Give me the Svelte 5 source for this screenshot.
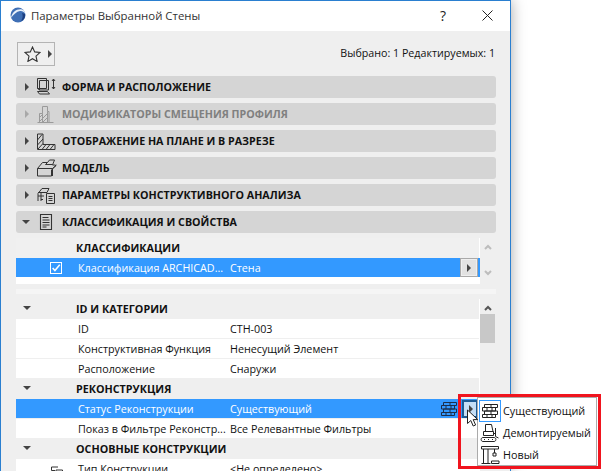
<script lang="ts">
  const sections = [
    { title: 'ФОРМА И РАСПОЛОЖЕНИЕ', icon: 'form' },
    { title: 'МОДИФИКАТОРЫ СМЕЩЕНИЯ ПРОФИЛЯ', icon: 'profile', disabled: true },
    { title: 'ОТОБРАЖЕНИЕ НА ПЛАНЕ И В РАЗРЕЗЕ', icon: 'hatch' },
    { title: 'МОДЕЛЬ', icon: 'model' },
    { title: 'ПАРАМЕТРЫ КОНСТРУКТИВНОГО АНАЛИЗА', icon: 'analysis' },
    { title: 'КЛАССИФИКАЦИЯ И СВОЙСТВА', icon: 'doc', open: true }
  ];

  const props = [
    { kind: 'head', label: 'ID И КАТЕГОРИИ' },
    { kind: 'row', label: 'ID', value: 'СТН-003' },
    { kind: 'row', label: 'Конструктивная Функция', value: 'Ненесущий Элемент' },
    { kind: 'row', label: 'Расположение', value: 'Снаружи' },
    { kind: 'head', label: 'РЕКОНСТРУКЦИЯ' },
    { kind: 'sel', label: 'Статус Реконструкции', value: 'Существующий' },
    { kind: 'row', label: 'Показ в Фильтре Реконстр...', value: 'Все Релевантные Фильтры' },
    { kind: 'head', label: 'ОСНОВНЫЕ КОНСТРУКЦИИ' },
    { kind: 'link', label: 'Тип Конструкции', value: '<Не определено>' }
  ];
</script>

{#snippet brick(color)}
  <svg width="16" height="14" viewBox="0 0 16 14" fill="none" stroke={color}>
    <path d="M2.500.5h13v3h-13zM.5 3.500h13v3.500H.5zM2.500 7h13v3.500h-13zM.5 10.500h13v3H.5zM9 .5v3M5 3.500V7M10 3.500V7M9 7v3.500M5 10.500v3M10 10.500v3" />
  </svg>
{/snippet}

<div class="window">
  <header class="titlebar">
    <svg class="logo" width="16" height="16" viewBox="0 0 16 16">
      <circle cx="8" cy="8" r="7.500" fill="#3f6fb5" />
      <path d="M1 11C2 5 7 1.500 12 2.500c2 .5 3 2 3 4-1-2-3-2.800-5-2.500C6.500 4.500 3.500 7.500 1 11z" fill="#e8f0fa" />
      <path d="M12 6c1 2 1 5-1 8 3-1 4.500-4 4-7z" fill="#1d3f80" />
    </svg>
    <span class="title">Параметры Выбранной Стены</span>
    <span class="help">?</span>
    <svg class="close" width="11" height="11" viewBox="0 0 11 11" stroke="#222" fill="none"><path d="M.5.5l10 10M10.500.5l-10 10" /></svg>
  </header>

  <div class="body">
    <div class="toolbar">
      <button class="fav" aria-label="Избранное">
        <svg width="17" height="16" viewBox="0 0 17 16" fill="none" stroke="#333" stroke-width="1.100"><path d="M8.500 1l2.200 4.900 5.300.6-4 3.600 1.100 5.300-4.600-2.700-4.600 2.700 1.100-5.300-4-3.600 5.300-.6z" /></svg>
        <i class="tri-r"></i>
      </button>
      <span class="counts">Выбрано: 1 Редактируемых: 1</span>
    </div>

    {#each sections as s}
      <div class="section" class:disabled={s.disabled}>
        <i class={s.open ? 'tri-d' : 'tri-r'}></i>
        <svg class="sicon" width="22" height="20" viewBox="0 0 22 20" fill="none" stroke={s.disabled ? '#9a9a9a' : '#333'} stroke-width="1">
          {#if s.icon === 'form'}
            <path d="M.5 1.500h9v10h-9zM2.500 3.500h9v9.500h-9zM.5 11.500l2 1.500M.5 14.500h10l2 2.500h-10zM16.500 2v10M15 4l1.500-2L18 4M15 10l1.500 2 1.500-2" />
          {:else if s.icon === 'profile'}
            <path d="M.5 18.500h16M2.500 18.500V9.500h3V2.500h5v5H12v11M5.500 9.500v9M10.500 7.500v11M6 14l4-4M6 18l4-4M3 13l2-2M3 17l2-2" />
          {:else if s.icon === 'hatch'}
            <path d="M.5 18.500V3H6v10.500h12v5zM.5 9L5 3.500M.5 14L6 8M1 18l5-5.500M5 18.500l4-5M9 18.500l4-5M13 18.500l4-5" />
          {:else if s.icon === 'model'}
            <path d="M.5 10.500l5-6h5l2-2.500h5l-2 5h3v1l-4 4v6H.5zM.5 10.500h15v7.500M15.500 10.500l4-3.500M10.500 4.500l-2 2h7" />
          {:else if s.icon === 'analysis'}
            <path d="M1 16V8.500L5 3.500h7l-2 4H1M1 11h6M4 8v8M4 14.500h2" />
            <path d="M9.500 8.500h8v10h-8zM11.500 11.500h4M11.500 13.500h4M11.500 15.500h4" />
          {:else}
            <path d="M3.500 2.500h11v15h-11zM5.500 5.500h6M5.500 8h7M5.500 10.500h7M5.500 13h7M5.500 15h4" stroke-width="1.100" />
          {/if}
        </svg>
        <span class="stitle">{s.title}</span>
      </div>
    {/each}

    <div class="classif">
      <div class="list">
        <div class="chead">КЛАССИФИКАЦИИ</div>
        <div class="csel">
          <span class="check">
            <svg width="10" height="10" viewBox="0 0 12 12" fill="none" stroke="#fff" stroke-width="1.800"><path d="M2 6l2.700 3L10.500 2" /></svg>
          </span>
          <span class="clabel">Классификация ARCHICAD...</span>
          <span>Стена</span>
          <button class="rowbtn" aria-label="Выбрать"><i class="tri-r"></i></button>
          <i class="sliver"></i>
        </div>
        <div class="cfoot"></div>
      </div>
      <div class="bar">
        <svg width="8" height="6" viewBox="0 0 8 6" fill="none" stroke="#bdbdbd" stroke-width="2"><path d="M1 5l3-3 3 3" /></svg>
        <svg width="8" height="6" viewBox="0 0 8 6" fill="none" stroke="#bdbdbd" stroke-width="2"><path d="M1 1l3 3 3-3" /></svg>
      </div>
    </div>

    <div class="divider"></div>

    <div class="proplist">
      <div class="list">
        {#each props as p}
          {#if p.kind === 'head'}
            <div class="phead"><i class="tri-d"></i><span>{p.label}</span></div>
          {:else}
            <div class="prow" class:sel={p.kind === 'sel'}>
              {#if p.kind === 'link'}
                <svg class="linkicon" width="14" height="10" viewBox="0 0 14 10" fill="none" stroke="#333"><path d="M8 2H1.500v3.500H5M6 5h6.500v3.500H6V5" /></svg>
              {/if}
              <span class="plabel">{p.label}</span>
              <span>{p.value}</span>
              {#if p.kind === 'sel'}
                <span class="rowbrick">{@render brick('#1d2f4a')}</span>
              {/if}
            </div>
          {/if}
        {/each}
      </div>
      <div class="bar scroll">
        <svg width="8" height="6" viewBox="0 0 8 6" fill="none" stroke="#555" stroke-width="2"><path d="M1 5l3-3 3 3" /></svg>
        <div class="thumb"></div>
      </div>
    </div>
  </div>
</div>

<div class="callout">
  <button class="trigger" aria-label="Открыть"><i class="tri-r"></i></button>
  <ul class="menu">
    <li>
      <span class="micon current">{@render brick('#222')}</span>
      <span class="mtext">Существующий</span>
    </li>
    <li>
      <span class="micon">
        <svg width="20" height="20" viewBox="0 0 20 20" fill="none" stroke="#222"><path d="M5.500 8.500V1.500h6l1.500 7M3.500 8.500h10v4h-10zM15.500 5v8.500l3 1.500M13.500 10.500h2M3 14.500h11c2.500 0 2.500 4 0 4H3c-2.500 0-2.500-4 0-4zM4 16.500h1M8 16.500h1M12 16.500h1" /></svg>
      </span>
      <span class="mtext">Демонтируемый</span>
    </li>
    <li>
      <span class="micon">
        <svg width="20" height="20" viewBox="0 0 20 20" fill="none" stroke="#222"><path d="M1.500 1.500h17v2.500h-17zM3.500 4v14M8 4v14M1.500 18.500h9M14.500 4v4M13 8h3v3h-3zM11.500 16h7.500v2.500h-7.500z" /></svg>
      </span>
      <span class="mtext">Новый</span>
    </li>
  </ul>
  <svg class="cursor" width="13" height="19" viewBox="0 0 13 19"><path d="M1.500 1v13.500l3.300-3 2.400 5.500 2.400-1-2.400-5.400h4.500z" fill="#fff" stroke="#222" /></svg>
</div>

<style>
  :global(body) { background: #fff; overflow: hidden; height: 471px; }
  :global(#app) { position: relative; font-family: "Open Sans", "Noto Sans", sans-serif; font-size: 10.750px; color: #111; }

  .window { width: 511px; height: 471px; box-sizing: border-box; border: 1px solid #2a7fd0; border-bottom: none; background: #efefef; box-shadow: 0 0 14px rgba(0, 0, 0, .35); overflow: hidden; }

  .titlebar { height: 30px; background: #fff; display: flex; align-items: center; padding: 0 0 2px 9px; box-sizing: border-box; }
  .logo { margin-right: 5px; }
  .title { flex: 1; font-size: 11.400px; color: #333; }
  .help { font-size: 14px; color: #222; margin-right: 36px; }
  .close { margin-right: 17px; }

  .body { padding: 0 14px 0 15px; }
  .toolbar { height: 45px; display: flex; align-items: flex-start; justify-content: space-between; padding-top: 11px; box-sizing: border-box; }
  .fav { width: 38px; height: 24px; margin: 0 0 0 1px; padding: 0 0 0 6px; border: 1px solid #b4b4b4; background: #efefef; display: flex; align-items: center; gap: 7px; box-sizing: border-box; }
  .counts { margin: 4px 1px 0 0; font-size: 10.700px; }

  .tri-r { display: block; width: 0; height: 0; border-left: 4px solid #444; border-top: 4px solid transparent; border-bottom: 4px solid transparent; }
  .tri-d { display: block; width: 0; height: 0; border-top: 4px solid #444; border-left: 4px solid transparent; border-right: 4px solid transparent; }

  .section { height: 22px; margin-bottom: 5px; background: #d5d5d5; border-radius: 3px; display: flex; align-items: center; }
  .section > .tri-r { margin-left: 9px; flex: none; }
  .section > .tri-d { margin-left: 6px; flex: none; }
  .sicon { flex: none; margin-left: 8px; }
  .section > .tri-d + .sicon { margin-left: 7px; }
  .stitle { font-weight: 700; font-size: 10.700px; margin: 0 0 0 3px; color: #111; white-space: nowrap; }
  .disabled .stitle { color: #808080; }
  .disabled > i { border-left-color: #a8a8a8; }

  .classif { display: flex; }
  .list { width: 464px; flex: none; box-shadow: inset -1px 0 0 #fff; }
  .bar { width: 16px; padding-right: 1px; box-sizing: border-box; display: flex; flex-direction: column; align-items: center; justify-content: space-between; }
  .classif .bar { padding-top: 6px; padding-bottom: 8px; }
  .chead { height: 20px; padding-left: 60px; font-weight: 700; background: #f0f0f0; color: #111; line-height: 20px; box-shadow: inset -1px 0 0 #fff; }
  .csel { height: 19px; background: #3399ff; color: #fff; display: grid; grid-template-columns: 62px 152px 1fr 18px 2px; align-items: center; line-height: 18px; }
  .check { justify-self: end; margin-right: 16px; width: 10px; height: 10px; border: 1px solid #fff; display: flex; align-items: center; justify-content: center; }
  .rowbtn { width: 18px; height: 19px; padding: 0 0 0 6px; border: 1px solid #a9a9a9; outline: 1px solid #efefef; outline-offset: -2px; background: #e2e2e2; display: flex; align-items: center; box-sizing: border-box; }
  .sliver { width: 1px; height: 19px; background: #3399ff; justify-self: end; margin-right: 1px; }
  .cfoot { height: 7px; background: #fff; }

  .divider { height: 5px; margin: 5px 0; background: #f5f5f5; }

  .proplist { display: flex; }
  .phead { height: 20px; background: #efefef; display: flex; align-items: center; font-weight: 700; color: #111; box-shadow: inset -1px 0 0 #fff; line-height: 20px; }
  .phead i { margin: -3px 0 0 7px; }
  .phead span { margin: 0 0 0 45px; }
  .prow { height: 19px; margin-bottom: 1px; background: #fff; display: grid; grid-template-columns: 62px 152px 1fr; align-items: center; position: relative; line-height: 18px; }
  .prow span { white-space: nowrap; }
  .plabel { grid-column: 2; }
  .prow > span:not(.plabel):not(.rowbrick) { grid-column: 3; }
  .prow.sel { background: #3399ff; color: #fff; }
  .rowbrick { position: absolute; left: 425px; top: 3px; line-height: 0; }
  .linkicon { position: absolute; left: 34px; top: 6px; }
  .scroll { justify-content: flex-start; padding-top: 6px; }
  .thumb { width: 15px; height: 29px; margin-top: 3px; background: #c8c8c8; }

  .callout { position: absolute; left: 458px; top: 394px; width: 137px; height: 69px; border: 3px solid #f0141e; }
  .trigger { position: absolute; left: 1px; top: 3px; width: 16px; height: 18px; padding: 0 0 0 5px; background: #c5def5; border: 2px solid #1c5a94; display: flex; align-items: center; box-sizing: border-box; }
  .menu { position: absolute; left: 16px; top: 0; width: 120px; height: 69px; margin: 0; padding: 2px 0 0 1px; box-sizing: border-box; list-style: none; background: #fff; border: 1px solid #ababab; font-size: 10.800px; }
  .menu li { height: 22px; display: flex; align-items: center; gap: 2px; white-space: nowrap; }
  .mtext { margin-top: -2px; }
  .micon { width: 22px; height: 22px; display: flex; align-items: center; justify-content: center; box-sizing: border-box; flex: none; }
  .current { border: 1px solid #3399ff; }
  .cursor { position: absolute; left: 5px; top: 12px; }
</style>
